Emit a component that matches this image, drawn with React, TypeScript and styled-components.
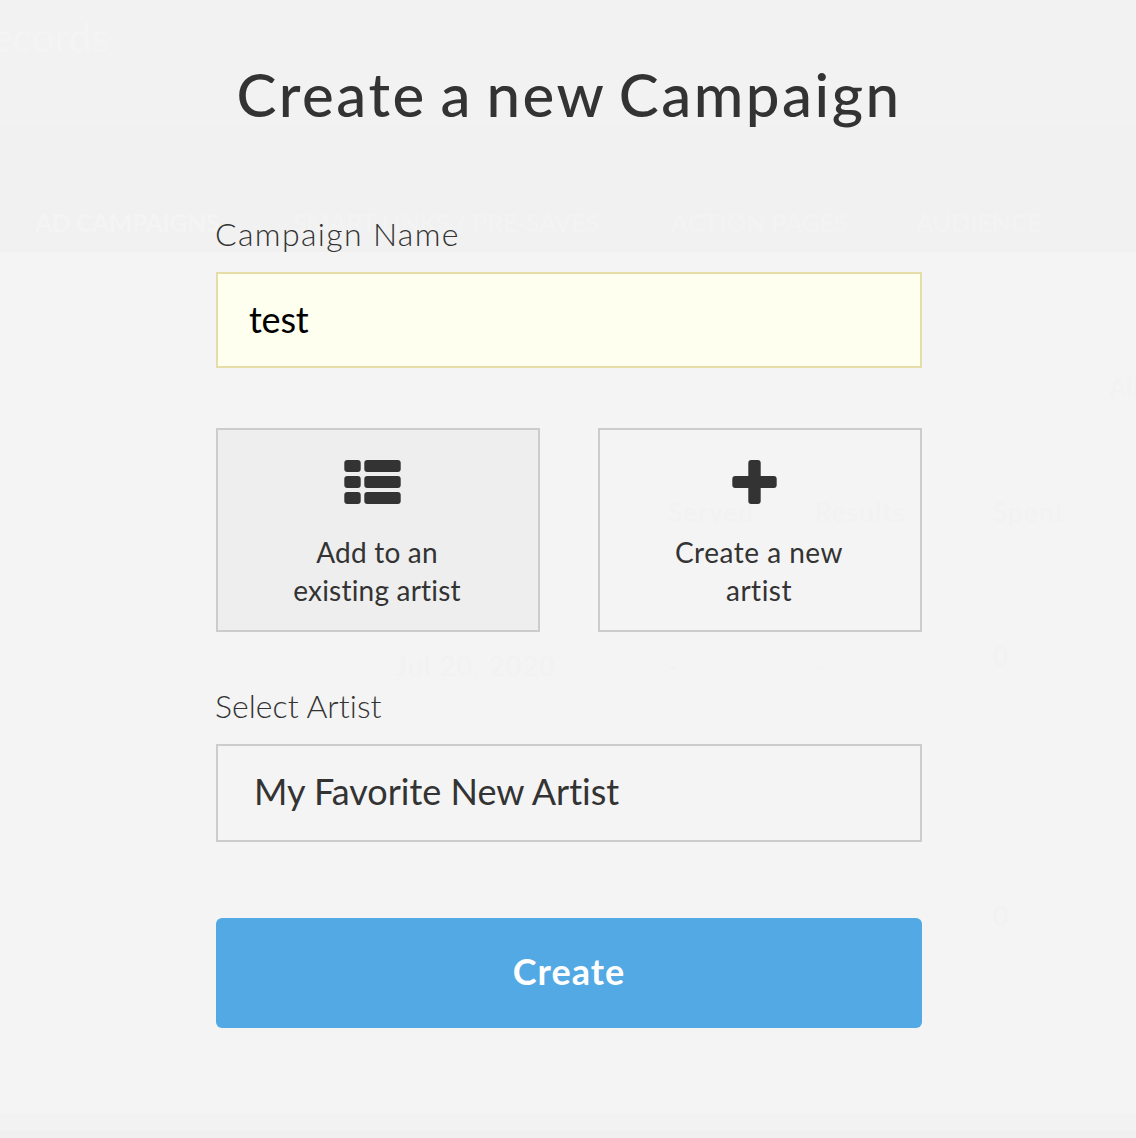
import React from "react";
import styled, { createGlobalStyle } from "styled-components";

const GlobalStyle = createGlobalStyle`
  *, *::before, *::after { box-sizing: border-box; }
  body {
    margin: 0;
    background: #f4f4f4;
    color: #333;
    font-family: Lato, "Open Sans", sans-serif;
    font-variant-ligatures: none;
    overflow: hidden;
  }
`;

const Screen = styled.div`
  position: relative;
  width: 1136px;
  height: 1138px;
  overflow: hidden;
`;

/* Dimmed dashboard that stays faintly visible under the dialog */
const Dashboard = styled.div`
  display: flex;
  flex-direction: column;
  height: 100%;
  color: #f2f2f2;
  font-size: 26px;
  white-space: nowrap;
`;

const DashboardHeader = styled.header`
  display: flex;
  flex-direction: column;
  justify-content: space-between;
  height: 252px;
  padding: 14px 0 15px;
  background: linear-gradient(#f2f2f2 50%, #f1f1f1 50%);
  color: #f4f4f4;
`;

const Brand = styled.div`
  width: 109px;
  display: flex;
  justify-content: flex-end;
  font-size: 41px;
  font-weight: 500;
  line-height: 46px;
  letter-spacing: -0.2px;
`;

const Nav = styled.nav`
  display: grid;
  grid-template-columns: 258px 378px 245px 1fr;
  padding-left: 35px;
  color: #f3f3f3;
  font-size: 25px;
  font-weight: 700;
  line-height: 30px;
`;

const NavItem = styled.span<{ $active?: boolean; $spacing: number }>`
  color: ${(p) => (p.$active ? "#f4f4f4" : "inherit")};
  letter-spacing: ${(p) => p.$spacing}px;
`;

const Filter = styled.div`
  padding: 117px 0 0 1109px;
  line-height: 36px;
`;

const Row = styled.div<{ $gap: number; $spacing: number }>`
  display: grid;
  grid-template-columns: 272px 147px 178px 1fr;
  height: 36px;
  margin-top: ${(p) => p.$gap}px;
  padding-left: 396px;
  line-height: 36px;
  letter-spacing: ${(p) => p.$spacing}px;
`;

const Amount = styled.span`
  margin-top: -10px;
`;

const DashboardFooter = styled.div`
  height: 24px;
  margin-top: auto;
  background: linear-gradient(#f2f2f2 70%, #f0f0f0 70%);
`;

const Overlay = styled.div`
  position: absolute;
  inset: 0;
  display: flex;
  justify-content: center;
`;

const Dialog = styled.form`
  display: flex;
  flex-direction: column;
  width: 706px;
  margin-left: 2px;
  padding-top: 58px;
`;

const Title = styled.h1`
  margin: 0 -40px 0 -40px;
  font-size: 60px;
  font-weight: 500;
  line-height: 72px;
  letter-spacing: 2.5px;
  word-spacing: -4px;
  text-align: center;
  white-space: nowrap;
`;

const Label = styled.label<{ $top: number; $spacing: number }>`
  margin-top: ${(p) => p.$top}px;
  margin-left: -1px;
  height: 40px;
  font-size: 32px;
  font-weight: 300;
  line-height: 40px;
  letter-spacing: ${(p) => p.$spacing}px;
`;

const NameInput = styled.input`
  height: 96px;
  margin-top: 18px;
  padding: 0 31px 2px;
  border: 2px solid #e4dda8;
  border-radius: 0;
  outline: none;
  background: #fffff0;
  color: #000;
  font: 400 36px Lato, sans-serif;
  letter-spacing: -0.2px;
`;

const Choices = styled.div`
  display: grid;
  grid-template-columns: 1fr 1fr;
  gap: 58px;
  margin-top: 60px;
`;

const Choice = styled.button<{ $selected?: boolean; $spacing: number }>`
  display: flex;
  flex-direction: column;
  align-items: center;
  height: 204px;
  padding: 30px 2px 0 0;
  border: 2px solid #ccc;
  background: ${(p) => (p.$selected ? "#eee" : "transparent")};
  color: #333;
  font: 400 28px/38px Lato, sans-serif;
  letter-spacing: ${(p) => p.$spacing}px;

  svg {
    display: block;
    margin: 0 9px 29px 0;
    fill: #333;
  }
`;

const ArtistSelect = styled.div`
  display: flex;
  align-items: center;
  height: 98px;
  margin-top: 18px;
  padding: 0 36px 4px;
  border: 2px solid #ccc;
  font-size: 36px;
`;

const Submit = styled.button`
  height: 110px;
  margin-top: 76px;
  padding: 0 0 4px;
  border: 0;
  border-radius: 6px;
  background: #52a9e4;
  color: #fff;
  font: 700 36px Lato, sans-serif;
  letter-spacing: 1px;
`;

const ListIcon = () => (
  <svg width="57" height="44" viewBox="0 0 57 44">
    {[0, 16, 32].map((y) => (
      <g key={y}>
        <rect x="0.3" y={y} width="16.4" height="12" rx="3" />
        <rect x="20.3" y={y} width="36.4" height="12" rx="3" />
      </g>
    ))}
  </svg>
);

const PlusIcon = () => (
  <svg width="45" height="44" viewBox="0 0 45 44">
    <rect x="0.3" y="16" width="44.4" height="12" rx="3" />
    <rect x="16.3" y="0" width="12.4" height="44" rx="3" />
  </svg>
);

export default function App() {
  return (
    <Screen>
      <GlobalStyle />
      <Dashboard aria-hidden="true">
        <DashboardHeader>
          <Brand>ecords</Brand>
          <Nav>
            <NavItem $active $spacing={-0.5}>AD CAMPAIGNS</NavItem>
            <NavItem $spacing={-0.4}>SMART LINKS / PRE-SAVES</NavItem>
            <NavItem $spacing={-0.2}>ACTION PAGES</NavItem>
            <NavItem $spacing={-0.1}>AUDIENCE</NavItem>
          </Nav>
        </DashboardHeader>
        <Filter>All</Filter>
        <Row $gap={89} $spacing={1.3}>
          <span />
          <span>Served</span>
          <span>Results</span>
          <span>Spent</span>
        </Row>
        <Row $gap={118} $spacing={1.6}>
          <span>Jul 20, 2020</span>
          <span>-</span>
          <span>-</span>
          <Amount>0</Amount>
        </Row>
        <Row $gap={224} $spacing={1.6}>
          <span />
          <span />
          <span />
          <Amount>0</Amount>
        </Row>
        <DashboardFooter />
      </Dashboard>
      <Overlay>
        <Dialog onSubmit={(e) => e.preventDefault()}>
          <Title>Create a new Campaign</Title>
          <Label htmlFor="name" $top={84} $spacing={1.35}>
            Campaign Name
          </Label>
          <NameInput id="name" defaultValue="test" />
          <Choices>
            <Choice type="button" $selected $spacing={0.2}>
              <ListIcon />
              <span>
                Add to an
                <br />
                existing artist
              </span>
            </Choice>
            <Choice type="button" $spacing={0.5}>
              <PlusIcon />
              <span>
                Create a new
                <br />
                artist
              </span>
            </Choice>
          </Choices>
          <Label $top={54} $spacing={0.05}>
            Select Artist
          </Label>
          <ArtistSelect>My Favorite New Artist</ArtistSelect>
          <Submit>Create</Submit>
        </Dialog>
      </Overlay>
    </Screen>
  );
}
